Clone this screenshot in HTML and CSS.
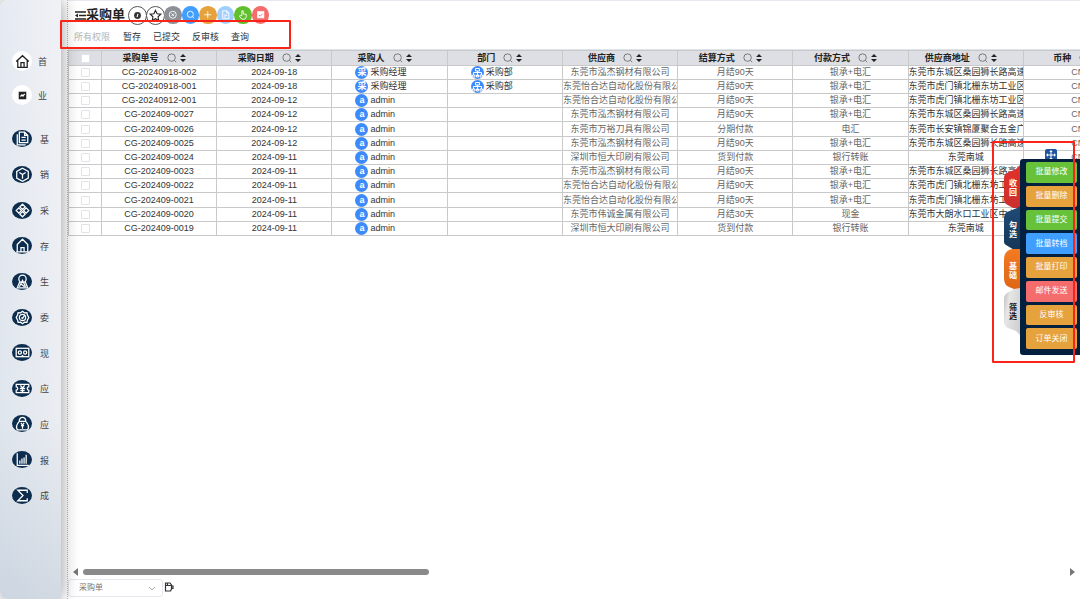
FILE: index.html
```html
<!DOCTYPE html>
<html lang="zh-CN">
<head>
<meta charset="utf-8">
<title>采购单</title>
<link rel="stylesheet" href="styles.css">
</head>
<body>
<svg class="defs" aria-hidden="true">
  <symbol id="search" viewBox="0 0 12 12"><circle cx="5.500" cy="5.500" r="4.500" fill="none" stroke="currentColor"/><path d="M9 9l2 2" stroke="currentColor"/></symbol>
  <symbol id="sort" viewBox="0 0 6 10"><path d="M0 4L3 1l3 3zM0 6h6L3 9z" fill="currentColor"/></symbol>
  <symbol id="org" viewBox="0 0 13 13"><path d="M4.500 2.500h4v2.500h-4zM6.500 5v5M2.500 9V6.500h8V9M1.500 9h2.500v2H1.500zM5.500 9h2v2h-2zM9 9h2.500v2H9z" fill="none" stroke="#fff"/></symbol>
</svg>
<div class="app">
  <nav class="sidebar">
    <div class="top-links">
      <a class="link" href="#"><span class="disc light"><svg viewBox="0 0 20 20"><path d="M4 10l6-5.500 6 5.500M5.500 9v6.500h9V9M8.500 15v-4h3v4"/></svg></span><span>首</span></a>
      <a class="link" href="#"><span class="disc light"><svg viewBox="0 0 20 20"><rect x="7" y="7" width="6" height="6" fill="#222"/><path class="thin-white" d="M8 11l1.500-1.500 1 1 1.500-2"/></svg></span><span>业</span></a>
    </div>
    <ul class="menu">
      <li><a class="link" href="#"><span class="disc"><svg viewBox="0 0 20 20"><path d="M7 4h5l3 3v7H7zM12 4v3h3M5 6v10h8M9 9h4M9 11.500h4"/></svg></span><span>基</span></a></li>
      <li><a class="link" href="#"><span class="disc"><svg viewBox="0 0 20 20"><path d="M10 4l5.500 3v6.500L10 16.500l-5.500-3V7zM7 8l3 2 3-2M10 10v4"/></svg></span><span>销</span></a></li>
      <li><a class="link" href="#"><span class="disc"><svg viewBox="0 0 20 20"><path d="M10 4l2.500 2.500L10 9 7.500 6.500zM10 11l2.500 2.500L10 16l-2.500-2.500zM6.500 7.500L9 10l-2.500 2.500L4 10zM13.500 7.500L16 10l-2.500 2.500L11 10z"/></svg></span><span>采</span></a></li>
      <li><a class="link" href="#"><span class="disc"><svg viewBox="0 0 20 20"><path d="M5 9l5-5 5 5v7H5zM4 16h12M8.500 16v-4h3v4"/></svg></span><span>存</span></a></li>
      <li><a class="link" href="#"><span class="disc"><svg viewBox="0 0 20 20"><circle cx="10" cy="7.500" r="3.500"/><path d="M7.500 10L5 16h10l-2.500-6M7 15l3-6 3 6M8 12l4 3"/></svg></span><span>生</span></a></li>
      <li><a class="link" href="#"><span class="disc"><svg viewBox="0 0 20 20"><path d="M10 4l1.800 1.500 2.400-.2.500 2.400L16 10l-1.300 2.300-.5 2.400-2.400-.2L10 16l-1.800-1.500-2.400.2-.5-2.400L4 10l1.300-2.300.5-2.400 2.400.2z"/><circle cx="10" cy="10" r="3"/><path d="M9 10l1 1 2-3"/></svg></span><span>委</span></a></li>
      <li><a class="link" href="#"><span class="disc"><svg viewBox="0 0 20 20"><rect x="4" y="6" width="12" height="8"/><circle cx="7.500" cy="10" r="1.500"/><circle cx="12.500" cy="10" r="1.500"/><path d="M9 14l1-1 1 1"/></svg></span><span>现</span></a></li>
      <li><a class="link" href="#"><span class="disc"><svg viewBox="0 0 20 20"><path d="M4 6h12v2.500a1.500 1.500 0 000 3V14H4v-2.500a1.500 1.500 0 000-3zM8 7l2 2.500L12 7M7.500 10h5M10 9.500V14M8 12h4"/></svg></span><span>应</span></a></li>
      <li><a class="link" href="#"><span class="disc"><svg viewBox="0 0 20 20"><path d="M7 8C6 3 14 3 13 8M7 8h6c3 3 3 6 2 8H5c-1-2-1-5 2-8zM8.500 9.500l1.500 2 1.500-2M8.500 12h3M10 11.500V15"/></svg></span><span>应</span></a></li>
      <li><a class="link" href="#"><span class="disc"><svg viewBox="0 0 20 20"><path d="M5 4v11.500h11M7.500 14v-3M9.500 14V9M11.500 14V8M13.500 14V5.500"/></svg></span><span>报</span></a></li>
      <li><a class="link" href="#"><span class="disc"><svg viewBox="0 0 20 20"><path d="M14.500 7.500V5H5.500l5 5-5 5h9v-2.500"/></svg></span><span>成</span></a></li>
    </ul>
  </nav>

  <main class="main">
    <header class="toolbar">
      <svg class="fold" viewBox="0 0 11 9"><path d="M0 1h11M4 4.500h7M0 8h11" stroke="#222" stroke-width="1.300"/><path d="M0 4.500l3-2v4z" fill="#222"/></svg>
      <h1 class="title">采购单</h1>
      <div class="outline-tools">
        <button class="tool outlined" aria-label="信息"><svg viewBox="0 0 20 20"><circle cx="10" cy="10" r="4" fill="#333"/><path d="M10.500 8L9.500 12" stroke="#fff" stroke-width="1.300"/></svg></button>
        <button class="tool outlined" aria-label="收藏"><svg viewBox="0 0 20 20"><path d="M10 4l1.900 4 4.300.500-3.200 3 .8 4.300L10 13.700l-3.800 2.100.8-4.300-3.200-3L8.100 8z" fill="none" stroke="#222" stroke-width="1.300"/></svg></button>
      </div>
      <div class="tools">
        <button class="tool gray" aria-label="关闭"><svg viewBox="0 0 20 20"><circle cx="10" cy="10" r="4"/><path d="M8.500 8.500l3 3M11.500 8.500l-3 3"/></svg></button>
        <button class="tool blue" aria-label="查询"><svg viewBox="0 0 20 20"><circle cx="9.500" cy="9.500" r="3.500"/><path d="M12 12l2 2"/></svg></button>
        <button class="tool orange" aria-label="新增"><svg viewBox="0 0 20 20"><path d="M10 6v8M6 10h8"/></svg></button>
        <button class="tool pale" aria-label="单据"><svg viewBox="0 0 20 20"><path d="M6.500 5.500h5l2 2v7h-7zM11 5.500v2.500h2.500M8 10.500h4M8 12.500h2"/></svg></button>
        <button class="tool green" aria-label="操作"><svg viewBox="0 0 20 20"><path d="M9 11V5.500h1.500V9l3.500.500v3L12.500 15H9l-3-3.500 1-.5z"/></svg></button>
        <button class="tool red" aria-label="审批"><svg viewBox="0 0 20 20"><rect x="6.500" y="6.500" width="7" height="7" fill="#fff"/><path class="tick" d="M8 10.500l1.500 1 2.500-2.500"/></svg></button>
      </div>
    </header>

    <div class="filters">
      <button class="filter muted">所有权限</button>
      <button class="filter">暂存</button>
      <button class="filter">已提交</button>
      <button class="filter">反审核</button>
      <button class="filter">查询</button>
    </div>

    <div class="grid-wrap">
      <table class="grid">
        <colgroup><col class="check-col"><col span="9"></colgroup>
        <thead><tr>
          <th><input type="checkbox" aria-label="全选"></th>
          <th><span class="head">采购单号<svg class="find"><use href="#search"/></svg><svg class="sort"><use href="#sort"/></svg></span></th>
          <th><span class="head">采购日期<svg class="find"><use href="#search"/></svg><svg class="sort"><use href="#sort"/></svg></span></th>
          <th><span class="head">采购人<svg class="find"><use href="#search"/></svg><svg class="sort"><use href="#sort"/></svg></span></th>
          <th><span class="head">部门<svg class="find"><use href="#search"/></svg><svg class="sort"><use href="#sort"/></svg></span></th>
          <th><span class="head">供应商<svg class="find"><use href="#search"/></svg><svg class="sort"><use href="#sort"/></svg></span></th>
          <th><span class="head">结算方式<svg class="find"><use href="#search"/></svg><svg class="sort"><use href="#sort"/></svg></span></th>
          <th><span class="head">付款方式<svg class="find"><use href="#search"/></svg><svg class="sort"><use href="#sort"/></svg></span></th>
          <th><span class="head">供应商地址<svg class="find"><use href="#search"/></svg><svg class="sort"><use href="#sort"/></svg></span></th>
          <th><span class="head">币种<svg class="find"><use href="#search"/></svg><svg class="sort"><use href="#sort"/></svg></span></th>
        </tr></thead>
        <tbody>
          <tr><td><input type="checkbox" aria-label="选择"></td><td>CG-20240918-002</td><td>2024-09-18</td><td><span class="who"><i class="avatar">采</i>采购经理</span></td><td><span class="who"><svg class="avatar"><use href="#org"/></svg>采购部</span></td><td class="soft">东莞市泓杰钢材有限公司</td><td class="soft">月结90天</td><td class="soft">银承+电汇</td><td>东莞市东城区桑园狮长路高速</td><td class="soft">CNY</td></tr>
          <tr><td><input type="checkbox" aria-label="选择"></td><td>CG-20240918-001</td><td>2024-09-18</td><td><span class="who"><i class="avatar">采</i>采购经理</span></td><td><span class="who"><svg class="avatar"><use href="#org"/></svg>采购部</span></td><td class="soft">东莞怡合达自动化股份有限公</td><td class="soft">月结90天</td><td class="soft">银承+电汇</td><td>东莞市虎门镇北栅东坊工业区</td><td class="soft">CNY</td></tr>
          <tr><td><input type="checkbox" aria-label="选择"></td><td>CG-20240912-001</td><td>2024-09-12</td><td><span class="who"><i class="avatar">a</i>admin</span></td><td></td><td class="soft">东莞怡合达自动化股份有限公</td><td class="soft">月结90天</td><td class="soft">银承+电汇</td><td>东莞市虎门镇北栅东坊工业区</td><td class="soft">CNY</td></tr>
          <tr><td><input type="checkbox" aria-label="选择"></td><td>CG-202409-0027</td><td>2024-09-12</td><td><span class="who"><i class="avatar">a</i>admin</span></td><td></td><td class="soft">东莞市泓杰钢材有限公司</td><td class="soft">月结90天</td><td class="soft">银承+电汇</td><td>东莞市东城区桑园狮长路高速</td><td class="soft">CNY</td></tr>
          <tr><td><input type="checkbox" aria-label="选择"></td><td>CG-202409-0026</td><td>2024-09-12</td><td><span class="who"><i class="avatar">a</i>admin</span></td><td></td><td class="soft">东莞市万裕刀具有限公司</td><td class="soft">分期付款</td><td class="soft">电汇</td><td>东莞市长安镇锦厦聚合五金广</td><td class="soft">CNY</td></tr>
          <tr><td><input type="checkbox" aria-label="选择"></td><td>CG-202409-0025</td><td>2024-09-12</td><td><span class="who"><i class="avatar">a</i>admin</span></td><td></td><td class="soft">东莞市泓杰钢材有限公司</td><td class="soft">月结90天</td><td class="soft">银承+电汇</td><td>东莞市东城区桑园狮长路高速</td><td class="soft">CNY</td></tr>
          <tr><td><input type="checkbox" aria-label="选择"></td><td>CG-202409-0024</td><td>2024-09-11</td><td><span class="who"><i class="avatar">a</i>admin</span></td><td></td><td class="soft">深圳市恒大印刷有限公司</td><td class="soft">货到付款</td><td class="soft">银行转账</td><td>东莞南城</td><td class="soft">CNY</td></tr>
          <tr><td><input type="checkbox" aria-label="选择"></td><td>CG-202409-0023</td><td>2024-09-11</td><td><span class="who"><i class="avatar">a</i>admin</span></td><td></td><td class="soft">东莞市泓杰钢材有限公司</td><td class="soft">月结90天</td><td class="soft">银承+电汇</td><td>东莞市东城区桑园狮长路高速</td><td class="soft">CNY</td></tr>
          <tr><td><input type="checkbox" aria-label="选择"></td><td>CG-202409-0022</td><td>2024-09-11</td><td><span class="who"><i class="avatar">a</i>admin</span></td><td></td><td class="soft">东莞怡合达自动化股份有限公</td><td class="soft">月结90天</td><td class="soft">银承+电汇</td><td>东莞市虎门镇北栅东坊工业区</td><td class="soft">CNY</td></tr>
          <tr><td><input type="checkbox" aria-label="选择"></td><td>CG-202409-0021</td><td>2024-09-11</td><td><span class="who"><i class="avatar">a</i>admin</span></td><td></td><td class="soft">东莞怡合达自动化股份有限公</td><td class="soft">月结90天</td><td class="soft">银承+电汇</td><td>东莞市虎门镇北栅东坊工业区</td><td class="soft">CNY</td></tr>
          <tr><td><input type="checkbox" aria-label="选择"></td><td>CG-202409-0020</td><td>2024-09-11</td><td><span class="who"><i class="avatar">a</i>admin</span></td><td></td><td class="soft">东莞市伟诚金属有限公司</td><td class="soft">月结30天</td><td class="soft">现金</td><td>东莞市大朗水口工业区中心路</td><td class="soft">CNY</td></tr>
          <tr><td><input type="checkbox" aria-label="选择"></td><td>CG-202409-0019</td><td>2024-09-11</td><td><span class="who"><i class="avatar">a</i>admin</span></td><td></td><td class="soft">深圳市恒大印刷有限公司</td><td class="soft">货到付款</td><td class="soft">银行转账</td><td>东莞南城</td><td class="soft">CNY</td></tr>
        </tbody>
      </table>
    </div>

    <div class="scrollbar">
      <svg class="arrow" viewBox="0 0 5 8"><path d="M5 0v8L0 4z" fill="#777"/></svg>
      <div class="track"><div class="thumb"></div></div>
      <svg class="arrow" viewBox="0 0 5 8"><path d="M0 0v8l5-4z" fill="#777"/></svg>
    </div>

    <footer class="footer">
      <div class="picker">
        <select aria-label="单据类型"><option>采购单</option></select>
        <svg class="chevron" viewBox="0 0 8 5"><path d="M1 1l3 3 3-3" fill="none" stroke="#aaa"/></svg>
      </div>
      <svg class="mug" viewBox="0 0 10 10"><path d="M1.500 1v8h5l1-2V3L6 1zM1.500 3.500h6M7.500 4H9v2.500H7.500M3.500 1v2.500" fill="none" stroke="#333" stroke-width="1.200"/></svg>
    </footer>
  </main>

  <aside class="dock">
    <button class="move" aria-label="移动"><svg viewBox="0 0 12 12"><path d="M6 2v8M2 6h8" stroke="#fff"/><path d="M6 1l1.700 2H4.300zM6 11l1.700-2H4.300zM1 6l2-1.700v3.400zM11 6L9 4.300v3.400z" fill="#fff"/></svg></button>
    <div class="tabs">
      <button class="tab t-red">收<br>回</button>
      <button class="tab t-navy">勾<br>选</button>
      <button class="tab t-orange">基<br>础</button>
      <button class="tab t-silver">筛<br>选</button>
    </div>
    <div class="actions">
      <button class="action green">批量修改</button>
      <button class="action orange">批量删除</button>
      <button class="action green">批量提交</button>
      <button class="action blue">批量转档</button>
      <button class="action orange">批量打印</button>
      <button class="action red">邮件发送</button>
      <button class="action orange">反审核</button>
      <button class="action orange">订单关闭</button>
    </div>
  </aside>

  <div class="mark mark-filters"></div>
  <div class="mark mark-dock"></div>
</div>
</body>
</html>
```
FILE: styles.css
```css
* { box-sizing: border-box; }
body {
  margin: 0;
  font: 9px/12px "Liberation Sans", "Noto Sans CJK SC", sans-serif;
  color: #333;
  background: #fff;
}
button { font: inherit; color: inherit; border: 0; padding: 0; background: none; }
.defs { display: none; }
.app { position: relative; display: flex; min-height: 100vh; overflow: hidden; }

/* sidebar */
.sidebar {
  position: relative;
  z-index: 1;
  flex: none;
  display: flex;
  flex-direction: column;
  width: 61px;
  padding: 51px 0 86px 12px;
  background: linear-gradient(to right, rgba(200, 215, 230, .25), rgba(255, 255, 255, .1)), linear-gradient(#eff0f5, #e8ebf0 70%, #cdd5df);
  border-radius: 8px 0 0 8px;
  box-shadow: 0 0 18px rgba(0, 0, 0, .42);
}
.top-links { display: grid; gap: 14px; padding-bottom: 16px; }
.top-links .link { gap: 6px; }
.menu { flex: 1; display: flex; flex-direction: column; margin: 0; padding: 0; list-style: none; }
.menu li { flex: 1; display: flex; align-items: center; }
.link { display: flex; align-items: center; gap: 8px; color: #444; text-decoration: none; }
.link > span:last-child { padding-top: 2px; }
.disc { display: flex; align-items: center; justify-content: center; width: 20px; height: 20px; border-radius: 50%; background: #0d2d4e; }
.menu .disc { height: 17px; }
.disc svg { flex: none; width: 21px; height: 21px; fill: none; stroke: #fff; stroke-width: 1.2; }
.disc.light { background: #fff; }
.disc.light svg { stroke: #222; }
.disc.light .thin-white { stroke: #fff; }

/* header */
.main {
  flex: 1;
  min-width: 0;
  display: flex;
  flex-direction: column;
  margin-left: 6px;
  border-left: 1px dotted #bbb;
  border-top: 1px solid #e6e9ef;
}
.toolbar { display: flex; align-items: center; height: 28px; padding-left: 7px; }
.fold { width: 11px; height: 9px; }
.title { margin: 0; font-size: 13px; line-height: 20px; color: #222; }
.outline-tools { display: flex; margin: 0 -1px 0 3px; }
.outline-tools .tool + .tool { margin-left: -1px; }
.tools { display: flex; width: 105px; }
.tool { display: grid; place-items: center; flex: 1; aspect-ratio: 1; border-radius: 50%; }
.tool svg { width: 100%; height: 100%; fill: none; stroke: #fff; }
.tool.outlined { flex: none; width: 19px; border: 1px solid #555; background: #fff; }
.tool.outlined svg { stroke: none; }
.tool .tick { stroke: #f56c6c; }
.filters { display: flex; gap: 12px; height: 20px; padding: 2px 0 0 6px; align-items: start; }
.filter { line-height: 12px; }
.muted { color: #b0b3b8; margin-right: 1px; }

.gray { background: #8d9097; }
.blue { background: #409eff; }
.orange { background: #e6a23c; }
.pale { background: #a0cfff; }
.green { background: #67c23a; }
.tool.green { background: #5fbf2c; }
.red { background: #f56c6c; }

/* table */
.grid-wrap { flex: 1; overflow: hidden; border-top: 1px solid #dde4ec; }
.grid { width: 1071px; table-layout: fixed; border-collapse: collapse; }
.check-col { width: 33px; }
.grid th, .grid td {
  height: 14px;
  padding: 0;
  border: 1px solid #c9c9c9;
  line-height: 13px;
  text-align: center;
  white-space: nowrap;
  overflow: hidden;
}
.grid tr:nth-child(5n) td { height: 15px; }
.grid th { height: 15px; background: #dddfe4; color: #222; }
.head { display: inline-flex; align-items: center; padding-right: 10px; }
.find { width: 10px; height: 10px; margin-left: 8px; color: #666; }
.sort { width: 6px; height: 10px; margin-left: 3px; }
.grid .soft { color: #666; }
.grid input {
  display: block;
  appearance: none;
  width: 9px;
  height: 9px;
  margin: 0 auto;
  border: 1px solid #e0e3e9;
  border-radius: 1px;
  background: #fff;
}
.who { display: flex; align-items: center; gap: 2px; padding-left: 23px; }
.avatar {
  flex: none;
  width: 13px;
  height: 13px;
  border-radius: 50%;
  background: #3d8bfa;
  color: #fff;
  font-style: normal;
  font-weight: 700;
}

/* bottom */
.scrollbar { display: flex; align-items: center; gap: 5px; height: 14px; padding: 0 5px; }
.arrow { width: 5px; height: 8px; }
.track { flex: 1; }
.thumb { width: 35.2%; height: 6px; border-radius: 3px; background: #8a8a8a; }
.footer { display: flex; height: 20px; gap: 1px; }
.picker { position: relative; width: 95px; height: 18px; }
.picker select {
  appearance: none;
  width: 100%;
  height: 100%;
  padding: 0 10px;
  border: 1px solid #e4e7ec;
  border-radius: 3px;
  background: #fff;
  color: #777;
  font: 8px/16px "Liberation Sans", "Noto Sans CJK SC", sans-serif;
}
.chevron { position: absolute; right: 7px; top: 7px; width: 8px; height: 5px; }
.mug { width: 10px; height: 10px; margin-top: 3px; }

/* floating dock */
.dock { position: absolute; z-index: 2; top: 149px; right: 0; width: 76px; display: grid; grid-template-columns: 16px 60px; }
.move { grid-column: 2; justify-self: start; margin-left: 25px; width: 12px; height: 10px; border-radius: 2px 2px 0 0; background: #1e559e; }
.move svg { display: block; width: 12px; height: 12px; }
.tabs { display: flex; flex-direction: column; padding-top: 6px; }
.tab {
  width: 16px;
  height: 46px;
  margin-bottom: -4px;
  padding-left: 2px;
  color: #fff;
  font-size: 8px;
  font-weight: 700;
  line-height: 9px;
}
.t-red { height: 45px; background: linear-gradient(#e3302b, #c9302e); clip-path: path("M16 0L12 4L3 8Q0 9 0 13V35Q0 37 2 39L9 43H16Z"); }
.t-navy { height: 47px; background: linear-gradient(#1f4b78, #153655); clip-path: path("M16 0L13 2L3 6Q0 8 0 11V36Q0 38 2 39L12 45L16 47Z"); }
.t-orange { height: 43px; background: linear-gradient(#f47b20, #dd6414); clip-path: path("M16 0H8Q0 2 0 10V29Q0 36 5 38L10 40H16Z"); }
.t-silver { height: 47px; margin: 0; color: #111; background: linear-gradient(100deg, #bbb, #e6e6e6 30%, #ccc); clip-path: path("M16 0L10 1L3 5Q0 7 0 11V34Q0 38 4 40L12 43L16 47Z"); }
.actions {
  display: grid;
  gap: 3px;
  grid-auto-rows: 1fr;
  height: 196px;
  padding: 3px 3px 6px 6px;
  border-radius: 3px 0 0 3px;
  background: #03213f;
}
.action { border-radius: 2px; color: #fff; font-size: 8px; }

/* highlight frames */
.mark { position: absolute; z-index: 3; border: 2px solid #fb2418; border-radius: 1px; pointer-events: none; }
.mark-filters { left: 60px; top: 20px; width: 231px; height: 29px; }
.mark-dock { right: 5px; top: 141px; width: 83px; height: 222px; }
```
